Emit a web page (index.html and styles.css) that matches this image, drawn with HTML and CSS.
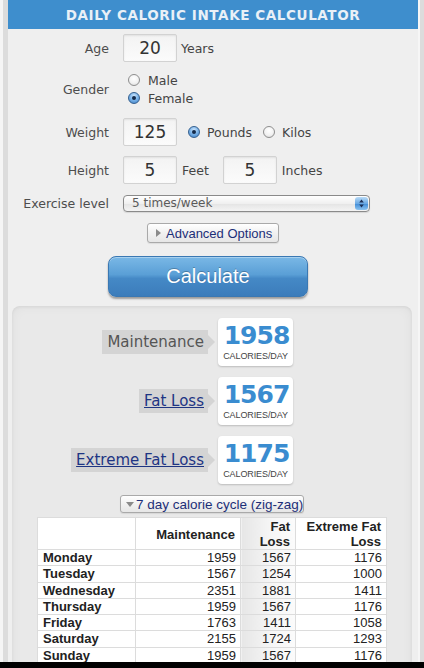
FILE: index.html
```html
<!DOCTYPE html>
<html>
<head>
<meta charset="utf-8">
<link rel="stylesheet" href="styles.css">
</head>
<body>
<div class="frame">
  <div class="panel">
    <div class="title">DAILY CALORIC INTAKE CALCULATOR</div>

    <div class="row row-age">
      <div class="label">Age</div>
      <div class="controls">
        <div class="field">20</div>
        <span class="unit unit-years">Years</span>
      </div>
    </div>

    <div class="row row-gender">
      <div class="label">Gender</div>
      <div class="controls radios-col">
        <div class="radio-line"><span class="radio"></span><span class="rtext">Male</span></div>
        <div class="radio-line"><span class="radio on"></span><span class="rtext">Female</span></div>
      </div>
    </div>

    <div class="row row-weight">
      <div class="label">Weight</div>
      <div class="controls">
        <div class="field">125</div>
        <span class="radio on r-pounds"></span><span class="rtext">Pounds</span>
        <span class="radio r-kilos"></span><span class="rtext">Kilos</span>
      </div>
    </div>

    <div class="row row-height">
      <div class="label">Height</div>
      <div class="controls">
        <div class="field">5</div>
        <span class="unit unit-feet">Feet</span>
        <div class="field field-in">5</div>
        <span class="unit unit-inches">Inches</span>
      </div>
    </div>

    <div class="row row-ex">
      <div class="label">Exercise level</div>
      <div class="controls">
        <div class="select">
          <span class="select-text">5 times/week</span>
          <span class="select-btn">
            <svg width="13" height="13" viewBox="0 0 13 13"><path d="M6.5 2.5 L8.8 5.4 H4.2 Z M6.5 10.5 L8.8 7.6 H4.2 Z" fill="#1d2f55"/></svg>
          </span>
        </div>
      </div>
    </div>

    <div class="adv-wrap">
      <div class="smallbtn adv"><span class="tri-r"></span>Advanced Options</div>
    </div>

    <div class="calc">Calculate</div>

    <div class="results">
      <div class="res-row">
        <div class="tagcell"><span class="tag"><span class="tag-text plain">Maintenance</span></span></div>
        <div class="card"><div class="num">1958</div><div class="per">CALORIES/DAY</div></div>
      </div>
      <div class="res-row">
        <div class="tagcell"><span class="tag"><a class="tag-text link" href="#">Fat Loss</a></span></div>
        <div class="card"><div class="num">1567</div><div class="per">CALORIES/DAY</div></div>
      </div>
      <div class="res-row">
        <div class="tagcell"><span class="tag"><a class="tag-text link" href="#">Extreme Fat Loss</a></span></div>
        <div class="card"><div class="num">1175</div><div class="per">CALORIES/DAY</div></div>
      </div>

      <div class="zig-wrap">
        <div class="smallbtn zig"><span class="tri-d"></span>7 day calorie cycle (zig-zag)</div>
      </div>

      <table class="cycle">
        <colgroup>
          <col class="c1"><col class="c2"><col class="c3"><col class="c4">
        </colgroup>
        <thead>
          <tr><th></th><th>Maintenance</th><th class="fl">Fat<br>Loss</th><th>Extreme Fat<br>Loss</th></tr>
        </thead>
        <tbody>
          <tr><th>Monday</th><td>1959</td><td class="fl">1567</td><td>1176</td></tr>
          <tr><th>Tuesday</th><td>1567</td><td class="fl">1254</td><td>1000</td></tr>
          <tr><th>Wednesday</th><td>2351</td><td class="fl">1881</td><td>1411</td></tr>
          <tr><th>Thursday</th><td>1959</td><td class="fl">1567</td><td>1176</td></tr>
          <tr><th>Friday</th><td>1763</td><td class="fl">1411</td><td>1058</td></tr>
          <tr><th>Saturday</th><td>2155</td><td class="fl">1724</td><td>1293</td></tr>
          <tr><th>Sunday</th><td>1959</td><td class="fl">1567</td><td>1176</td></tr>
        </tbody>
      </table>
    </div>
  </div>
</div>
</body>
</html>
```

FILE: styles.css
```css
html, body {
  margin: 0;
  padding: 0;
  background: #000;
}
body {
  width: 424px;
  height: 668px;
  overflow: hidden;
}
.frame {
  height: 662px;
  overflow: hidden;
  background: #dcdcdc;
  border-left: 3px solid #f5f5f5;
  padding-left: 5px;
  box-sizing: border-box;
  width: 424px;
}
.panel {
  width: 410px;
  height: 662px;
  background: #efefef;
  border-right: 2px solid #f6f6f6;
  font-family: "DejaVu Sans", Verdana, sans-serif;
  color: #4a4a4a;
}
.title {
  height: 29px;
  line-height: 30px;
  background: #3e8ecd;
  color: #e9f0f7;
  font-weight: bold;
  font-size: 13.5px;
  letter-spacing: 0.6px;
  text-align: center;
}
.row {
  display: flex;
  align-items: center;
}
.label {
  width: 101px;
  text-align: right;
  font-size: 12.5px;
  color: #4d4d4d;
  flex: none;
}
.controls {
  margin-left: 14px;
  display: flex;
  align-items: center;
  font-size: 12.5px;
  color: #444;
}
.row-age { margin-top: 5px; }
.row-gender { margin-top: 9px; }
.row-weight { margin-top: 11px; }
.row-height { margin-top: 10px; }
.row-ex { margin-top: 11px; }

.field {
  width: 54px;
  height: 28px;
  box-sizing: border-box;
  border: 1px solid #d2d2d2;
  border-radius: 2px;
  background: linear-gradient(#f3f3f3, #fbfbfb);
  box-shadow: inset 0 1px 2px rgba(0,0,0,0.08);
  text-align: center;
  font-size: 17px;
  line-height: 27px;
  color: #333;
}
.unit-years { margin-left: 4px; }
.unit-feet { margin-left: 5px; }
.field-in { margin-left: 14px; }
.unit-inches { margin-left: 5px; }

.radios-col {
  flex-direction: column;
  align-items: flex-start;
}
.radio-line {
  height: 18px;
  display: flex;
  align-items: center;
  margin-left: 5px;
}
.radio {
  width: 12px;
  height: 12px;
  box-sizing: border-box;
  border-radius: 50%;
  border: 1px solid #8e8e8e;
  background: radial-gradient(circle at 50% 35%, #ffffff 0%, #f2f2f2 55%, #d6d6d6 100%);
  display: inline-block;
  flex: none;
  position: relative;
}
.radio.on {
  border-color: #35608f;
  background: radial-gradient(circle at 50% 30%, #cfe6fb 0%, #7fb6ea 45%, #3c7fc6 100%);
}
.radio.on::after {
  content: "";
  position: absolute;
  left: 3px;
  top: 3px;
  width: 4px;
  height: 4px;
  border-radius: 50%;
  background: #142a4a;
}
.rtext {
  margin-left: 8px;
}
.r-pounds { margin-left: 11px; }
.r-kilos { margin-left: 11px; }
.row-weight .rtext { margin-left: 7px; }

.select {
  width: 247px;
  height: 17px;
  box-sizing: border-box;
  border: 1px solid #8a8a8a;
  border-radius: 4px;
  background: linear-gradient(#ffffff, #f0f0f0 50%, #e4e4e4 51%, #f4f4f4);
  display: flex;
  align-items: center;
  justify-content: space-between;
  box-shadow: 0 1px 1px rgba(0,0,0,0.1);
}
.select-text {
  margin-left: 8px;
  font-size: 12px;
  color: #5a5a5a;
  line-height: 15px;
}
.select-btn {
  width: 13px;
  height: 13px;
  margin-right: 1px;
  border-radius: 3px;
  background: linear-gradient(#b9dbf7, #6aa9e4 50%, #3f8bd6 51%, #8cc3f0);
  display: flex;
}

.adv-wrap {
  margin-top: 11px;
  display: flex;
  justify-content: center;
}
.smallbtn {
  box-sizing: border-box;
  border: 1px solid #a9a9a9;
  border-radius: 3px;
  background: linear-gradient(#ffffff, #f1f1f1 50%, #e6e6e6);
  font-family: "Liberation Sans", Arial, sans-serif;
  color: #1d2f78;
  display: flex;
  align-items: center;
  white-space: nowrap;
  box-shadow: 0 1px 1px rgba(0,0,0,0.08);
}
.adv {
  width: 132px;
  height: 20px;
  font-size: 13px;
  padding-left: 8px;
}
.tri-r {
  width: 0;
  height: 0;
  border-top: 4px solid transparent;
  border-bottom: 4px solid transparent;
  border-left: 5px solid #8a8a8a;
  margin-right: 5px;
}
.calc {
  margin-top: 13px;
  margin-left: 100px;
  width: 200px;
  height: 41px;
  box-sizing: border-box;
  border: 1px solid #3a78b3;
  border-radius: 8px;
  background: linear-gradient(#7ab8e6, #5a9fd6 45%, #4589c6 55%, #3b7cbb);
  box-shadow: 0 2px 2px rgba(0,0,0,0.35), inset 0 1px 0 rgba(255,255,255,0.35);
  color: #fff;
  font-family: "Liberation Sans", Arial, sans-serif;
  font-size: 20px;
  line-height: 39px;
  text-align: center;
  text-shadow: 0 -1px 0 rgba(0,0,0,0.25);
}

.results {
  margin-top: 9px;
  margin-left: 4px;
  width: 400px;
  height: 400px;
  border-radius: 8px;
  background: #e9e9e9;
  box-shadow: inset 0 0 12px rgba(0,0,0,0.05), inset 0 1px 3px rgba(0,0,0,0.06);
  padding-top: 12px;
  box-sizing: border-box;
}
.res-row {
  display: grid;
  grid-template-columns: 206px 75px;
  align-items: center;
  margin-bottom: 11px;
}
.tagcell {
  display: flex;
  justify-content: flex-end;
  padding-right: 3px;
}
.tag {
  position: relative;
  background: #d4d4d4;
  height: 24px;
  display: flex;
  align-items: center;
  padding: 0 4px 0 5px;
  margin-right: 7px;
}
.tag::after {
  content: "";
  position: absolute;
  right: -7px;
  top: 5px;
  border-top: 7px solid transparent;
  border-bottom: 7px solid transparent;
  border-left: 7px solid #d4d4d4;
}
.tag-text {
  font-size: 15px;
}
.plain { color: #555; }
.link {
  color: #1e3583;
  text-decoration: underline;
}
.card {
  height: 48px;
  box-sizing: border-box;
  background: #fff;
  border-radius: 4px;
  box-shadow: 0 1px 2px rgba(0,0,0,0.2);
  text-align: center;
  padding-top: 5px;
}
.num {
  font-family: "DejaVu Sans", Verdana, sans-serif;
  font-weight: bold;
  font-size: 25px;
  letter-spacing: -1px;
  line-height: 26px;
  color: #3a8cd0;
  margin-left: 2px;
}
.per {
  font-family: "Liberation Sans", Arial, sans-serif;
  font-size: 9px;
  color: #444;
  line-height: 12px;
  margin-top: 1px;
  letter-spacing: -0.1px;
}
.zig-wrap {
  display: flex;
  justify-content: center;
  margin-top: 0;
}
.zig {
  width: 184px;
  height: 18px;
  font-size: 13.5px;
  padding-left: 5px;
}
.tri-d {
  width: 0;
  height: 0;
  border-left: 4px solid transparent;
  border-right: 4px solid transparent;
  border-top: 5px solid #8a8a8a;
  margin-right: 2px;
  flex: none;
}
.cycle {
  margin: 4px auto 0;
  width: 349px;
  border-collapse: collapse;
  background: #fff;
  font-family: "Liberation Sans", Arial, sans-serif;
  font-size: 13px;
  color: #222;
  table-layout: fixed;
}
.c1 { width: 98px; }
.c2 { width: 105px; }
.c3 { width: 55px; }
.c4 { width: 91px; }
.cycle th, .cycle td {
  border: 1px solid #dcdcdc;
  padding: 0 5px;
  line-height: 15.3px;
  text-align: right;
}
.cycle thead th {
  font-weight: bold;
  line-height: 15px;
  padding-top: 1px;
  padding-bottom: 0;
  vertical-align: middle;
  height: 31px;
  box-sizing: border-box;
}
.cycle tbody th {
  text-align: left;
  font-weight: bold;
}
.cycle td { padding-right: 4px; }
.cycle .fl {
  background: linear-gradient(to right, #e6e6e6, #f7f7f7 60%, #fbfbfb);
}
```
